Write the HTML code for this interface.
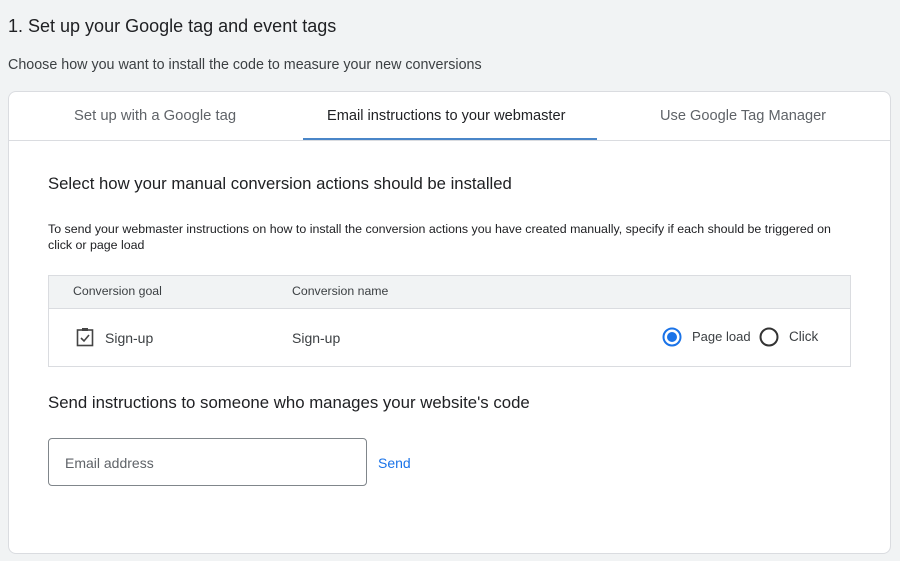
<!DOCTYPE html>
<html><head><style>
body{margin:0;width:900px;height:561px;background:#f1f3f4;font-family:"Liberation Sans",sans-serif;color:#202124;position:relative;overflow:hidden}
.a{position:absolute;white-space:nowrap}
</style></head><body>
<div class="a" style="left:8px;top:16px;font-size:18px">1. Set up your Google tag and event tags</div>
<div class="a" style="left:8px;top:57px;font-size:14.3px;color:#3c4043">Choose how you want to install the code to measure your new conversions</div>
<div class="a" style="left:8px;top:91px;width:881px;height:461px;background:#fff;border:1px solid #dadce0;border-radius:8px"></div>
<div class="a" style="left:9px;top:140px;width:881px;height:1px;background:#dadce0"></div>
<div class="a" style="left:74px;top:108px;font-size:14.8px;color:#5f6368">Set up with a Google tag</div>
<div class="a" style="left:327px;top:108px;font-size:14.6px;color:#202124">Email instructions to your webmaster</div>
<div class="a" style="left:660px;top:108px;font-size:14.6px;color:#5f6368">Use Google Tag Manager</div>
<div class="a" style="left:303px;top:138px;width:294px;height:2px;background:#4a86c8"></div>
<div class="a" style="left:48px;top:174px;font-size:16.7px">Select how your manual conversion actions should be installed</div>
<div class="a" style="left:48px;top:221px;font-size:12.4px;line-height:16px;white-space:normal;width:810px">To send your webmaster instructions on how to install the conversion actions you have created manually, specify if each should be triggered on click or page load</div>
<div class="a" style="left:48px;top:275px;width:801px;height:90px;border:1px solid #dadce0"></div>
<div class="a" style="left:49px;top:276px;width:801px;height:32px;background:#f1f3f4;border-bottom:1px solid #dadce0"></div>
<div class="a" style="left:73px;top:284px;font-size:12.3px;color:#3c4043">Conversion goal</div>
<div class="a" style="left:292px;top:284px;font-size:12.3px;color:#3c4043">Conversion name</div>
<svg class="a" style="left:76px;top:327px" width="18" height="20" viewBox="0 0 18 20"><rect x="1.5" y="3" width="15" height="15.5" fill="none" stroke="#444" stroke-width="1.6"/><rect x="6" y="1" width="6" height="3" fill="#444"/><path d="M5 11l3 3 5-6" fill="none" stroke="#444" stroke-width="1.6"/></svg>
<div class="a" style="left:105px;top:330px;font-size:14px;color:#3c4043">Sign-up</div>
<div class="a" style="left:292px;top:330px;font-size:14px;color:#3c4043">Sign-up</div>
<svg class="a" style="left:662px;top:327px" width="20" height="20"><circle cx="10" cy="10" r="8.5" fill="none" stroke="#1a73e8" stroke-width="2"/><circle cx="10" cy="10" r="5" fill="#1a73e8"/></svg>
<div class="a" style="left:692px;top:329px;font-size:13px;color:#3c4043">Page load</div>
<svg class="a" style="left:759px;top:327px" width="20" height="20"><circle cx="10" cy="10" r="8.5" fill="none" stroke="#333" stroke-width="2"/></svg>
<div class="a" style="left:789px;top:329px;font-size:13.5px;color:#3c4043">Click</div>
<div class="a" style="left:48px;top:393px;font-size:16.8px">Send instructions to someone who manages your website's code</div>
<div class="a" style="left:48px;top:438px;width:317px;height:46px;border:1px solid #80868b;border-radius:4px"></div>
<div class="a" style="left:65px;top:455px;font-size:14px;color:#5f6368">Email address</div>
<div class="a" style="left:378px;top:455px;font-size:14px;color:#1a73e8">Send</div>
</body></html>
